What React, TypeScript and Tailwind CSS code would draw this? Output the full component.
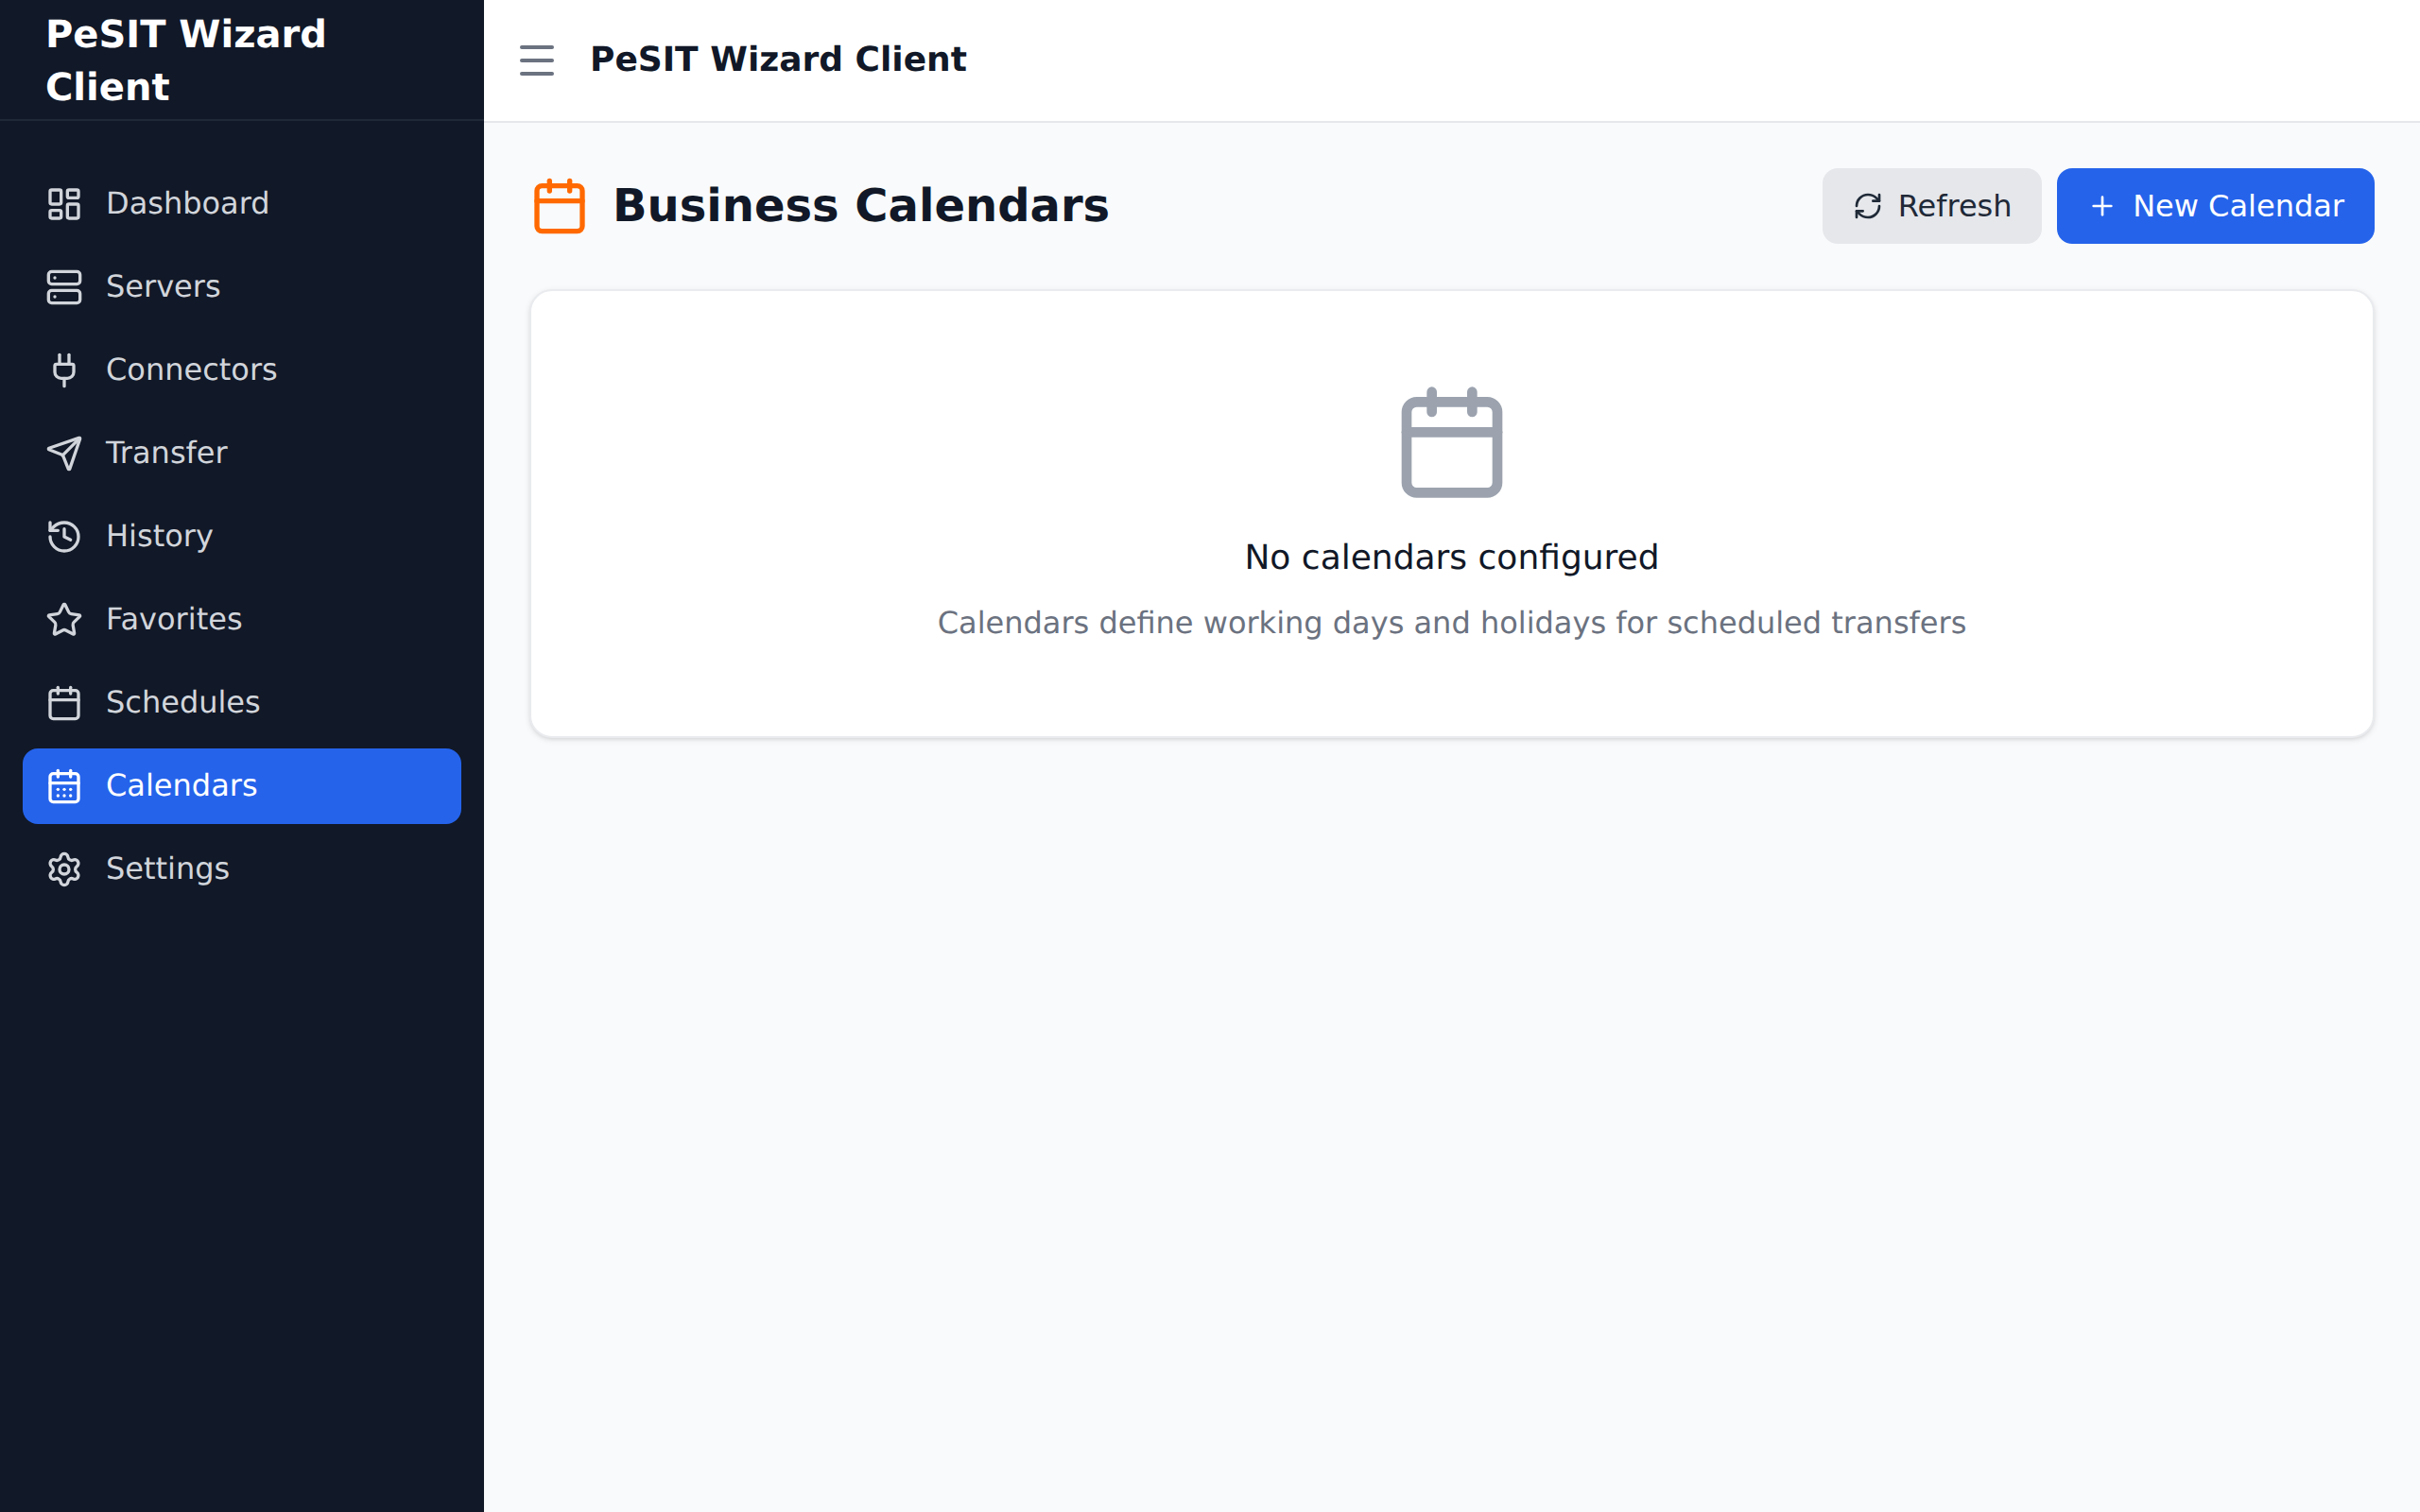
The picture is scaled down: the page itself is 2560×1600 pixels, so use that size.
import {
  Calendar,
  CalendarDays,
  History,
  LayoutDashboard,
  Menu,
  Plug,
  Plus,
  RefreshCw,
  Send,
  Server,
  Settings,
  Star,
} from "lucide-react";

const navItems = [
  { label: "Dashboard", icon: LayoutDashboard },
  { label: "Servers", icon: Server },
  { label: "Connectors", icon: Plug },
  { label: "Transfer", icon: Send },
  { label: "History", icon: History },
  { label: "Favorites", icon: Star },
  { label: "Schedules", icon: Calendar },
  { label: "Calendars", icon: CalendarDays, active: true },
  { label: "Settings", icon: Settings },
];

function Sidebar() {
  return (
    <aside className="w-[512px] shrink-0 h-full bg-[#111827] flex flex-col">
      <div className="h-[128px] shrink-0 flex items-center px-12 pt-[3px] border-b-2 border-[#1f2937]">
        <span className="text-[40px] leading-[56px] font-bold text-white">PeSIT Wizard Client</span>
      </div>
      <nav className="flex flex-col gap-2 px-6 py-12">
        {navItems.map((item) => {
          const Icon = item.icon;
          return (
            <a
              key={item.label}
              className={
                item.active
                  ? "h-20 flex items-center gap-6 px-6 rounded-2xl bg-[#2563eb] text-white text-[32px]"
                  : "h-20 flex items-center gap-6 px-6 rounded-2xl text-[#d1d5db] text-[32px]"
              }
            >
              <Icon className="w-10 h-10 shrink-0" />
              <span className="pb-0.5">{item.label}</span>
            </a>
          );
        })}
      </nav>
    </aside>
  );
}

function Header() {
  return (
    <header className="h-[130px] shrink-0 bg-white border-b-2 border-[#e5e7eb] flex items-center gap-8 px-8">
      <Menu className="w-12 h-12 text-[#6b7280]" />
      <span className="text-[36px] font-semibold text-[#111827]">PeSIT Wizard Client</span>
    </header>
  );
}

export default function App() {
  return (
    <div className="w-full h-screen flex overflow-hidden bg-[#f9fafb] font-['DejaVu_Sans',sans-serif] [text-rendering:geometricPrecision]">
      <Sidebar />
      <div className="flex-1 flex flex-col min-w-0">
        <Header />
        <main className="flex-1 p-12">
          <div className="flex items-center justify-between mb-12">
            <div className="flex items-center gap-6">
              <Calendar className="w-16 h-16 text-orange-500" />
              <h1 className="text-[48px] font-bold text-[#111827]">Business Calendars</h1>
            </div>
            <div className="flex items-center gap-4">
              <button className="h-20 w-[232px] flex items-center justify-center gap-4 rounded-2xl bg-[#e5e7eb] text-[#1f2937] text-[32px]">
                <RefreshCw className="w-8 h-8" />
                Refresh
              </button>
              <button className="h-20 flex items-center gap-4 px-8 rounded-2xl bg-[#2563eb] text-white text-[32px]">
                <Plus className="w-8 h-8" />
                New Calendar
              </button>
            </div>
          </div>

          <div className="bg-white rounded-3xl border-2 border-[#e9ebee] shadow-[0_2px_6px_0_rgba(0,0,0,0.1),0_2px_4px_-2px_rgba(0,0,0,0.1)] py-24 flex flex-col items-center">
            <Calendar className="w-32 h-32 text-[#9ca3af] mb-[31px]" />
            <h3 className="text-[36px] leading-[56px] text-[#111827] font-medium">No calendars configured</h3>
            <p className="text-[32px] leading-[48px] text-[#6b7280] mt-4">
              Calendars define working days and holidays for scheduled transfers
            </p>
          </div>
        </main>
      </div>
    </div>
  );
}
